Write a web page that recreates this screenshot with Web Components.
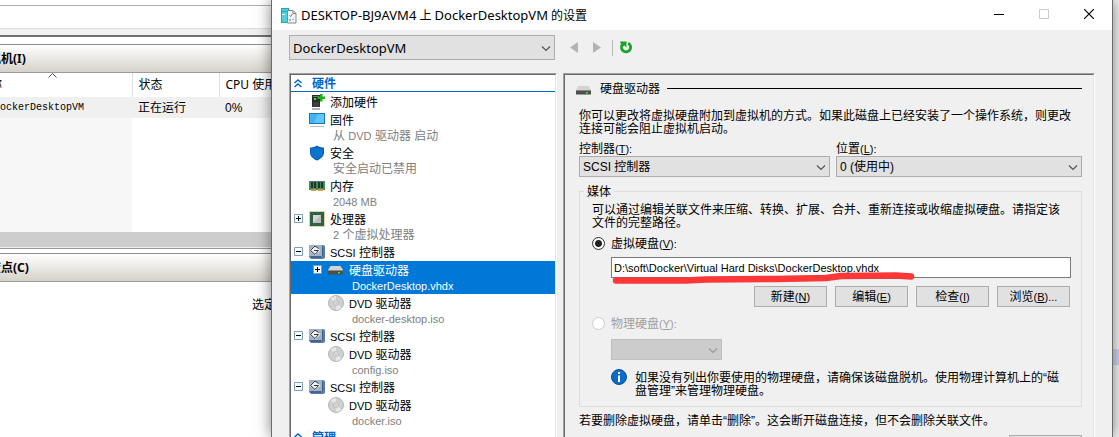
<!DOCTYPE html>
<html lang="zh-CN">
<head>
<meta charset="utf-8">
<title>DockerDesktopVM</title>
<style>
  body {
    margin: 0;
    height: 100vh;
    display: flex;
    overflow: hidden;
    background: #fff;
    color: #000;
    font: 12px/13px "Liberation Sans", "Noto Sans CJK SC", sans-serif;
  }
</style>
</head>
<body>
<manager-window></manager-window>
<settings-dialog></settings-dialog>
<desktop-edge></desktop-edge>

<script>
// shared by the elements that show mixed Chinese / Latin text
const textStyle = `
  * { box-sizing: border-box; }
  .latin { font-size: 11px; }
  u { text-underline-offset: 1px; }
`;

// wraps Latin runs, and underlines the access key in "(X)"
function mixed(text) {
  return text
    .replace(/[\x21-\x7e]+(?: [\x21-\x7e]+)*/g, (run) => `<span class="latin">${run}</span>`)
    .replace(/\(([A-Z])\)/g, "(<u>$1</u>)");
}

const drive = `
  <svg width="15" height="9" viewBox="0 0 15 9">
    <path d="M2.5 0h10L15 4H0z" fill="#d3d3d3"/>
    <path d="M0 4h15v4.5H0z" fill="#4b4f4d"/>
    <path d="M0 4h15v1H0z" fill="#8a8a8a"/>
    <path d="M10 6h2v1.5h-2z" fill="#3ee05a"/>
  </svg>`;

const icons = {
  drive,
  add: `
    <svg width="16" height="16" viewBox="0 0 16 16">
      <path d="M3 1h8v12H3z" fill="#2b2b2b"/>
      <path d="M4 2h6v1H4z" fill="#777"/>
      <path d="M5 4h2v2H5z" fill="#45e04b"/>
      <path d="M4 8h6v5H4z" fill="#404040"/>
      <path d="M3 14.500h8v1H3z" fill="#666"/>
      <path d="M11 0h2.500v2.500H16V5h-2.500v2.500H11V5H8.500V2.500H11z" fill="#19b219"/>
    </svg>`,
  firmware: `
    <svg width="16" height="16" viewBox="0 0 16 16">
      <path d="M0 1h16v11H0z" fill="#1b76b8"/>
      <path d="M1 2h14v9H1z" fill="#3fb3f5"/>
      <path d="M9 2h6v9H5z" fill="#62c5fb"/>
      <path d="M1 14h14v1H1z" fill="#b9bcc2"/>
    </svg>`,
  security: `
    <svg width="16" height="16" viewBox="0 0 16 16">
      <path d="M8 .5C6 2 3.500 2.500 1 2.500v5c0 4 3.500 6.500 7 8 3.500-1.500 7-4 7-8v-5c-2.500 0-5-.5-7-2z" fill="#0b5ca8"/>
      <path d="M8 2C6.200 3.100 4 3.500 2 3.500v4c0 3.300 3 5.500 6 6.900 3-1.400 6-3.600 6-6.900v-4c-2 0-4.200-.4-6-1.500z" fill="#0b73d0"/>
    </svg>`,
  memory: `
    <svg width="16" height="16" viewBox="0 0 16 16">
      <path d="M0 3h16v9H0z" fill="#3f8a5f"/>
      <path d="M2 4h2v6H2zM5 4h2v6H5zM9 4h2v6H9zM12 4h2v6h-2z" fill="#2b2f2d"/>
      <path d="M2 11h5v2H2zM9 11h5v2H9z" fill="#d09a3c"/>
    </svg>`,
  cpu: `
    <svg width="16" height="16" viewBox="0 0 16 16">
      <path d="M.5.5h15v15H.5z" fill="none" stroke="#c3a24e" stroke-dasharray="1 1"/>
      <path d="M1 1h14v14H1z" fill="#2f6143"/>
      <path d="M4 4h8v8H4z" fill="#d5d5d5"/>
      <path d="M12 4v8H4z" fill="#bdbdbd"/>
    </svg>`,
  scsi: `
    <svg width="16" height="14" viewBox="0 0 16 14">
      <path d="M0 0h14l2 1v12l-2 1H2l-2-2z" fill="#5b7aa5"/>
      <path d="M0 0h13v11H0z" fill="#9fb2cc"/>
      <path d="M2 11h10v2H2z" fill="#46638e"/>
      <path d="M13 2h1v9h-1z" fill="#3f5d8b"/>
      <path d="M6 .5 11.500 5.500 6 10.500.5 5.500z" fill="#f1f1f1"/>
      <path d="M9.500 3.500 6 1 1.500 5.500 6 9.500l3.500-4H5" fill="none" stroke="#333"/>
    </svg>`,
  disc: `
    <svg width="16" height="16" viewBox="0 0 16 16">
      <circle cx="8" cy="8" r="7.500" fill="#cfd1d0" stroke="#b3b5b4"/>
      <path d="M8 8 2.500 3.500A7 7 0 0 1 8 1zM8 8l5.500 4.500A7 7 0 0 1 8 15z" fill="#e6e6e6"/>
      <circle cx="8" cy="8" r="2.500" fill="#e9e9e9" stroke="#bbb"/>
      <circle cx="8" cy="8" r="1" fill="#fff" stroke="#999" stroke-width=".5"/>
    </svg>`,
};

class PaneHeader extends HTMLElement {
  connectedCallback() {
    this.attachShadow({ mode: "open" }).innerHTML = `
    <style>
      :host {
        display: block;
        height: 29px;
        box-sizing: border-box;
        border-top: 1px solid #8c8c8c;
        border-bottom: 1px solid #999;
        background: linear-gradient(#fff, #d6d2c9);
        font: bold 12px/27px "Noto Sans", "Noto Sans CJK SC", sans-serif;
        white-space: nowrap;
      }
    </style>
    <slot></slot>
    `;
  }
}

class ManagerWindow extends HTMLElement {
  connectedCallback() {
    this.attachShadow({ mode: "open" }).innerHTML = `
    <style>
      :host {
        flex: 0 0 271px;
        display: flex;
        flex-direction: column;
        overflow: hidden;
        background: #fff;
      }
      * { box-sizing: border-box; }
      .menu { height: 6px; border-bottom: 1px solid #a9adb3; }
      .address { height: 23px; border-bottom: 1px solid #ddd; }
      .edge { height: 8px; background: #f0f0f0; border-bottom: 2px solid #707070; }
      pane-header { margin-top: 7px; }
      .cut { margin-left: -11px; }
      .list { height: 159px; background: linear-gradient(90deg, #f7f7f7 132px, #fff 132px); }
      table { border-collapse: collapse; table-layout: fixed; width: 332px; }
      th, td { padding: 0 0 0 6px; text-align: left; font-weight: normal; overflow: hidden; white-space: nowrap; }
      th {
        position: relative;
        height: 24px;
        background: #fff;
        border-right: 1px solid #e0e0e0;
        font: 12px/24px "Noto Sans", "Noto Sans CJK SC", sans-serif;
      }
      td { height: 21px; padding-top: 1px; background: #f0f0f0; }
      th:first-child, td:first-child { padding: 0; }
      .name { margin-left: -6px; font: 10px/21px "Liberation Mono", monospace; }
      .first { margin-left: -10px; }
      th svg { position: absolute; left: 48px; top: 0; }
      .scroll { height: 16px; background: #cdcdcd; border-bottom: 1px solid #eee; }
      .line { height: 1px; background: #999; }
      .scroll + .line + pane-header { margin-top: 4px; }
      p { margin: 17px 0 0 252px; white-space: nowrap; }
    </style>
    <div class="menu"></div>
    <div class="address"></div>
    <div class="edge"></div>
    <pane-header><div class="cut">拟机(I)</div></pane-header>
    <div class="list">
      <table>
        <colgroup><col style="width: 132px"><col style="width: 87px"><col></colgroup>
        <tr>
          <th><div class="first">称</div>
            <svg width="9" height="5" viewBox="0 0 9 5"><path d="M.5 4.500l4-4 4 4" fill="none" stroke="#555"/></svg>
          </th>
          <th>状态</th>
          <th>CPU 使用</th>
        </tr>
        <tr><td><div class="name">DockerDesktopVM</div></td><td>正在运行</td><td>0%</td></tr>
      </table>
    </div>
    <div class="scroll"></div>
    <div class="line"></div>
    <pane-header><div class="cut">查点(C)</div></pane-header>
    <p>选定</p>
    `;
  }
}

class DesktopEdge extends HTMLElement {
  connectedCallback() {
    this.attachShadow({ mode: "open" }).innerHTML = `
    <style>
      :host { flex: 0 0 6px; display: flex; flex-direction: column; background: #f4f4f4; }
      .row { margin-top: 349px; height: 16px; background: #d3d6f5; }
    </style>
    <div class="row"></div>
    `;
  }
}

class ComboBox extends HTMLElement {
  connectedCallback() {
    const label = this.getAttribute("label");
    const value = this.getAttribute("value");
    const off = this.hasAttribute("disabled");
    this.attachShadow({ mode: "open" }).innerHTML = `
    <style>
      ${textStyle}
      :host { display: block; }
      label { display: block; height: 14px; line-height: 16px; margin-bottom: 1px; }
      .box { position: relative; }
      select {
        display: block;
        appearance: none;
        width: 100%;
        height: var(--combo-height, 21px);
        margin: 0;
        padding: 1px 20px 0 3px;
        border: 1px solid #adadad;
        border-radius: 0;
        background: #e1e1e1;
        color: #000;
        font: var(--combo-font, 12px/18px "Liberation Sans", "Noto Sans CJK SC", sans-serif);
      }
      select:disabled { background: #ccc; border-color: #bfbfbf; opacity: 1; }
      svg { position: absolute; right: 4px; top: 50%; margin-top: -2px; pointer-events: none; }
    </style>
    ${label ? `<label for="box">${mixed(label)}</label>` : ""}
    <div class="box">
      <select id="box" ${label ? "" : `aria-label="${this.getAttribute("name")}"`} ${off ? "disabled" : ""}>
        <option>${value || ""}</option>
      </select>
      <svg width="10" height="6" viewBox="0 0 10 6"><path d="M1 .5l4 4 4-4" fill="none" stroke="${off ? "#999" : "#555"}" stroke-width="1.200"/></svg>
    </div>
    `;
  }
}

class PushButton extends HTMLElement {
  connectedCallback() {
    const text = this.getAttribute("text");
    this.attachShadow({ mode: "open" }).innerHTML = `
    <style>
      ${textStyle}
      :host { display: block; width: 73px; }
      button {
        display: block;
        width: 100%;
        height: 21px;
        padding: 2px 0 0;
        border: 1px solid #adadad;
        background: #e1e1e1;
        color: #000;
        font: inherit;
      }
    </style>
    <button type="button" aria-label="${this.getAttribute("name") || text}">${text ? mixed(text) : ""}</button>
    `;
  }
}

class RadioOption extends HTMLElement {
  connectedCallback() {
    this.attachShadow({ mode: "open" }).innerHTML = `
    <style>
      ${textStyle}
      :host { display: block; }
      label { display: flex; align-items: center; gap: 6px; height: 14px; }
      span { line-height: 14px; }
      label > span { padding-top: 2px; }
      input {
        appearance: none;
        flex: none;
        width: 13px;
        height: 13px;
        margin: 0;
        border: 1px solid #333;
        border-radius: 50%;
        background: #fff;
      }
      input:checked { background: radial-gradient(circle, #222 3px, #fff 4px); }
      input:disabled { border-color: #ccc; }
      :disabled + span { color: #a0a0a0; }
    </style>
    <label>
      <input type="radio" ${this.hasAttribute("checked") ? "checked" : ""} ${this.hasAttribute("disabled") ? "disabled" : ""}>
      <span>${mixed(this.getAttribute("label"))}</span>
    </label>
    `;
  }
}

class TreeSection extends HTMLElement {
  connectedCallback() {
    this.attachShadow({ mode: "open" }).innerHTML = `
    <style>
      :host {
        display: flex;
        align-items: center;
        gap: 10px;
        height: 17px;
        box-sizing: border-box;
        padding-left: 3px;
        border-bottom: 1px solid #0066cc;
        color: #0066cc;
        font: bold 12px/16px "Noto Sans CJK SC", sans-serif;
      }
      svg { flex: none; }
    </style>
    <svg width="8" height="9" viewBox="0 0 8 9"><path d="M.5 4L4 1l3.500 3M.5 8L4 5l3.500 3" fill="none" stroke="#0066cc" stroke-width="1.500"/></svg>
    <slot></slot>
    `;
  }
}

class TreeItem extends HTMLElement {
  connectedCallback() {
    const sub = this.getAttribute("sub");
    const toggle = this.getAttribute("toggle");
    this.attachShadow({ mode: "open" }).innerHTML = `
    <style>
      ${textStyle}
      :host { display: flex; padding-left: 3px; }
      :host([level="2"]) { padding-left: 22px; }
      :host([selected]) { background: #0078d7; color: #fff; }
      .toggle { flex: 0 0 15px; padding-top: 4px; }
      .toggle svg { display: block; }
      .icon { flex: 0 0 21px; height: 18px; display: flex; align-items: center; }
      .main { line-height: 20px; height: 18px; }
      .sub { line-height: 14px; height: 15px; padding-left: 3px; color: #808080; }
      :host([selected]) .sub { color: #fff; }
    </style>
    <div class="toggle">${toggle ? `
      <svg width="9" height="9" viewBox="0 0 9 9">
        <path d="M.5.5h8v8h-8z" fill="#fff" stroke="#7b9ebd"/>
        <path d="M2 4.500h5${toggle === "plus" ? "M4.500 2v5" : ""}" stroke="#000"/>
      </svg>` : ""}
    </div>
    <div class="icon">${icons[this.getAttribute("icon")]}</div>
    <div>
      <div class="main">${mixed(this.getAttribute("label"))}</div>
      ${sub ? `<div class="sub">${mixed(sub)}</div>` : ""}
    </div>
    `;
  }
}

class SunkenPanel extends HTMLElement {
  connectedCallback() {
    this.attachShadow({ mode: "open" }).innerHTML = `
    <style>
      :host {
        display: block;
        box-sizing: border-box;
        border: solid;
        border-width: 1px 1px 0;
        border-color: #a0a0a0 #fff #fff #a0a0a0;
      }
      .inner {
        height: 100%;
        box-sizing: border-box;
        border: solid;
        border-width: 1px 1px 0;
        border-color: #696969 #e3e3e3 #e3e3e3 #696969;
      }
    </style>
    <div class="inner"><slot></slot></div>
    `;
  }
}

class TitleBar extends HTMLElement {
  connectedCallback() {
    this.attachShadow({ mode: "open" }).innerHTML = `
    <style>
      :host { display: flex; align-items: center; height: 30px; background: #fff; padding-left: 9px; }
      .title { flex: 1; margin-left: 4px; font: 12px/30px "Noto Sans", "Noto Sans CJK SC", sans-serif; white-space: nowrap; }
      .latin { font-size: 13px; }
      button { width: 45px; height: 30px; padding: 0 2px 2px 0; border: 0; background: none; }
      button svg { display: block; margin: 0 auto; }
    </style>
    <svg width="16" height="17" viewBox="0 0 16 17">
      <path d="M0 1h8v15H0z" fill="#21a6b5"/>
      <path d="M1 2h6v2H1zM1 5h6v10H1z" fill="#4fd0dc"/>
      <path d="M1 7h3v1H1z" fill="#fff"/>
      <path d="M6.500 3.500h5.500l3 3v9.500H6.500z" fill="#f3f3f3" stroke="#888"/>
      <path d="M12 3.500v3h3" fill="none" stroke="#888"/>
      <path d="M8.500 8.500l1 1 2-2.500" fill="none" stroke="#2a7bd3"/>
      <path d="M8 12h2v2H8zM11 12h2v1h-2z" fill="#9ab6d6"/>
    </svg>
    <div class="title"><span class="latin">DESKTOP-BJ9AVM4</span> 上 <span class="latin">DockerDesktopVM</span> 的设置</div>
    <button type="button" aria-label="最小化"><svg width="10" height="10" viewBox="0 0 10 10"><path d="M0 5.500h10" stroke="#000"/></svg></button>
    <button type="button" aria-label="最大化" disabled><svg width="10" height="10" viewBox="0 0 10 10"><path d="M.5.5h9v9h-9z" fill="none" stroke="#ccc"/></svg></button>
    <button type="button" aria-label="关闭"><svg width="10" height="10" viewBox="0 0 10 10"><path d="M0 0l10 10M10 0L0 10" stroke="#000" stroke-width="1.200"/></svg></button>
    `;
  }
}

class ToolBar extends HTMLElement {
  connectedCallback() {
    this.attachShadow({ mode: "open" }).innerHTML = `
    <style>
      :host { display: flex; align-items: center; padding: 5px 17px 13px; }
      combo-box {
        flex: 0 0 266px;
        --combo-height: 25px;
        --combo-font: 13px/22px "Noto Sans", sans-serif;
      }
      button { padding: 0; border: 0; background: none; }
      svg { display: block; }
      .back { margin-left: 15px; }
      .next { margin-left: 15px; }
      .bar { width: 1px; height: 16px; margin: 0 6px 0 11px; background: #b9b9b9; }
    </style>
    <combo-box name="虚拟机" value="DockerDesktopVM"></combo-box>
    <button class="back" type="button" aria-label="后退"><svg width="8" height="11" viewBox="0 0 8 11"><path d="M8 0v11L0 5.500z" fill="#b3b3b3"/></svg></button>
    <button class="next" type="button" aria-label="前进"><svg width="8" height="11" viewBox="0 0 8 11"><path d="M0 0v11l8-5.500z" fill="#b3b3b3"/></svg></button>
    <div class="bar"></div>
    <button type="button" aria-label="刷新">
      <svg width="14" height="13" viewBox="0 0 14 13">
        <path d="M9.200 2.200A4.600 4.600 0 1 1 3 4" fill="none" stroke="#1ba32b" stroke-width="2.800"/>
        <path d="M1 .5h6.500v6L5.500 4.500 3 6z" fill="#1ba32b"/>
      </svg>
    </button>
    `;
  }
}

class DrivePage extends HTMLElement {
  connectedCallback() {
    this.attachShadow({ mode: "open" }).innerHTML = `
    <style>
      ${textStyle}
      :host { display: block; padding: 0 11px; }
      p { margin: 0; line-height: 13px; }
      .heading { display: flex; align-items: center; gap: 9px; height: 27px; }
      .heading svg { flex: none; margin-top: 3px; }
      .heading span { padding-top: 2px; }
      .heading hr { flex: 1; margin: 0 0 0 -2px; border: 0; border-top: 1px solid #000; }
      .body { padding-left: 3px; }
      .intro { margin-top: 8px; }
      .place { display: flex; gap: 6px; margin: 5px 0 7px; }
      .place combo-box { flex: 251 1 0; }
      .place combo-box + combo-box { flex-grow: 246; }
      fieldset { min-width: 0; margin: 0; padding: 6px 10px 8px 12px; border: 1px solid #dcdcdc; }
      legend { margin-left: -8px; padding: 0 3px; height: 14px; line-height: 16px; }
      .virtual { margin-top: 6px; }
      .indent { margin-left: 19px; }
      .path { position: relative; margin-top: 7px; }
      .path input {
        display: block;
        width: 100%;
        height: 21px;
        padding: 0 2px;
        border: 1px solid #7a7a7a;
        background: #fff;
        color: #000;
        font: 11px/19px "Liberation Sans", sans-serif;
      }
      .path svg { position: absolute; left: 0; top: 12px; pointer-events: none; }
      .buttons { display: flex; justify-content: flex-end; gap: 8px; margin: 8px 1px 9px 0; }
      .physical { width: 111px; margin-top: 9px; }
      .note { display: flex; gap: 8px; margin-top: 9px; padding-right: 8px; }
      .note svg { flex: none; }
      .note p { padding-top: 3px; }
      .remove { margin: 8px 0 7px; }
      .remove + push-button { margin-left: auto; }
    </style>
    <div class="heading">${drive}<span>硬盘驱动器</span><hr></div>
    <div class="body">
      <p class="intro">你可以更改将虚拟硬盘附加到虚拟机的方式。如果此磁盘上已经安装了一个操作系统，则更改连接可能会阻止虚拟机启动。</p>
      <div class="place">
        <combo-box label="控制器(T):" value="SCSI 控制器"></combo-box>
        <combo-box label="位置(L):" value="0 (使用中)"></combo-box>
      </div>
      <fieldset>
        <legend>媒体</legend>
        <p>可以通过编辑关联文件来压缩、转换、扩展、合并、重新连接或收缩虚拟硬盘。请指定该文件的完整路径。</p>
        <radio-option class="virtual" label="虚拟硬盘(V):" checked></radio-option>
        <div class="path indent">
          <input type="text" aria-label="虚拟硬盘" value="D:\\soft\\Docker\\Virtual Hard Disks\\DockerDesktop.vhdx">
          <svg width="310" height="16" viewBox="0 0 310 16">
            <path d="M5 11.500L75 11.500 95 10.500 165 10 215 9 230 7 285 6.500 300 7.500" fill="none" stroke="#fc3737" stroke-width="6.500" stroke-linecap="round" stroke-linejoin="round"/>
          </svg>
        </div>
        <div class="buttons">
          <push-button text="新建(N)"></push-button>
          <push-button text="编辑(E)"></push-button>
          <push-button text="检查(I)"></push-button>
          <push-button text="浏览(B)..."></push-button>
        </div>
        <radio-option label="物理硬盘(Y):" disabled></radio-option>
        <combo-box class="physical indent" name="物理硬盘" disabled></combo-box>
        <div class="note indent">
          <svg width="16" height="16" viewBox="0 0 16 16">
            <circle cx="8" cy="8" r="7.500" fill="#0a6cc8" stroke="#0b4f93"/>
            <path d="M7 3h2v2H7zM7 6.500h2V13H7z" fill="#fff"/>
          </svg>
          <p>如果没有列出你要使用的物理硬盘，请确保该磁盘脱机。使用物理计算机上的“磁盘管理”来管理物理硬盘。</p>
        </div>
      </fieldset>
      <p class="remove">若要删除虚拟硬盘，请单击“删除”。这会断开磁盘连接，但不会删除关联文件。</p>
      <push-button name="删除"></push-button>
    </div>
    `;
  }
}

class SettingsDialog extends HTMLElement {
  connectedCallback() {
    this.attachShadow({ mode: "open" }).innerHTML = `
    <style>
      :host {
        flex: 1;
        min-width: 0;
        z-index: 1;
        display: flex;
        flex-direction: column;
        background: #f0f0f0;
        border: solid #6b6b6b;
        border-width: 0 1px;
        box-shadow: 0 0 14px rgba(0, 0, 0, 0.5);
      }
      .panes { flex: 1; min-height: 0; display: flex; gap: 6px; padding: 0 17px; }
      .tree { flex: 0 0 268px; background: #fff; }
      .page { flex: 1; min-width: 0; }
      tree-section + tree-item { margin-top: 1px; }
    </style>
    <title-bar></title-bar>
    <tool-bar></tool-bar>
    <div class="panes">
      <sunken-panel class="tree">
        <tree-section>硬件</tree-section>
        <tree-item icon="add" label="添加硬件"></tree-item>
        <tree-item icon="firmware" label="固件" sub="从 DVD 驱动器 启动"></tree-item>
        <tree-item icon="security" label="安全" sub="安全启动已禁用"></tree-item>
        <tree-item icon="memory" label="内存" sub="2048 MB"></tree-item>
        <tree-item icon="cpu" toggle="plus" label="处理器" sub="2 个虚拟处理器"></tree-item>
        <tree-item icon="scsi" toggle="minus" label="SCSI 控制器"></tree-item>
        <tree-item icon="drive" toggle="plus" level="2" selected label="硬盘驱动器" sub="DockerDesktop.vhdx"></tree-item>
        <tree-item icon="disc" level="2" label="DVD 驱动器" sub="docker-desktop.iso"></tree-item>
        <tree-item icon="scsi" toggle="minus" label="SCSI 控制器"></tree-item>
        <tree-item icon="disc" level="2" label="DVD 驱动器" sub="config.iso"></tree-item>
        <tree-item icon="scsi" toggle="minus" label="SCSI 控制器"></tree-item>
        <tree-item icon="disc" level="2" label="DVD 驱动器" sub="docker.iso"></tree-item>
        <tree-section>管理</tree-section>
      </sunken-panel>
      <sunken-panel class="page"><drive-page></drive-page></sunken-panel>
    </div>
    `;
  }
}

customElements.define("pane-header", PaneHeader);
customElements.define("manager-window", ManagerWindow);
customElements.define("desktop-edge", DesktopEdge);
customElements.define("combo-box", ComboBox);
customElements.define("push-button", PushButton);
customElements.define("radio-option", RadioOption);
customElements.define("tree-section", TreeSection);
customElements.define("tree-item", TreeItem);
customElements.define("sunken-panel", SunkenPanel);
customElements.define("title-bar", TitleBar);
customElements.define("tool-bar", ToolBar);
customElements.define("drive-page", DrivePage);
customElements.define("settings-dialog", SettingsDialog);
</script>
</body>
</html>
